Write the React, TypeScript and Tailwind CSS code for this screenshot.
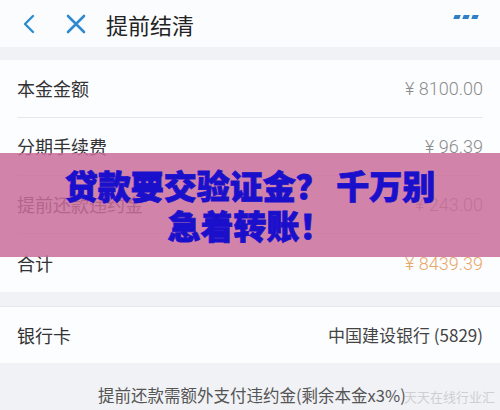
import React from 'react';

const font = { fontFamily: '"Noto Sans CJK SC", "Noto Sans", sans-serif' };
const num = { fontFamily: 'Roboto, "Noto Sans CJK SC", sans-serif' };

const rows = [
  { label: '本金金额', value: '¥ 8100.00', accent: false },
  { label: '分期手续费', value: '¥ 96.39', accent: false },
  { label: '提前还款违约金', value: '¥ 243.00', accent: false },
  { label: '合计', value: '¥ 8439.39', accent: true },
];

const App = () => {
  return (
    <div className="relative w-[500px] h-[410px] overflow-hidden bg-[#f1f2f6]" style={font}>
      {/* header */}
      <div className="h-[47px] bg-[#fbfcfe] flex items-center">
        <svg width="16" height="22" viewBox="0 0 16 22" className="ml-[21px]">
          <path d="M12 3 L4 11 L12 19" fill="none" stroke="#2f8bd0" strokeWidth="2.4" strokeLinecap="round" strokeLinejoin="round" />
        </svg>
        <svg width="22" height="22" viewBox="0 0 22 22" className="ml-[28px]">
          <path d="M3 3 L19 19 M19 3 L3 19" fill="none" stroke="#2f8bd0" strokeWidth="2.6" strokeLinecap="round" />
        </svg>
        <span className="ml-[19px] text-[22px] text-[#222] leading-none">提前结清</span>
        <div className="ml-auto mr-[22px] flex gap-[3px] -mt-[14px]">
          <span className="w-[6px] h-[4px] bg-[#2f7fc8] -skew-x-[20deg]" />
          <span className="w-[6px] h-[4px] bg-[#2f7fc8] -skew-x-[20deg]" />
          <span className="w-[6px] h-[4px] bg-[#2f7fc8] -skew-x-[20deg]" />
        </div>
      </div>

      {/* amounts card */}
      <div className="mt-[13px] bg-[#fcfdff] px-[17px]">
        {rows.map((r, i) => (
          <div
            key={r.label}
            className={`h-[58px] flex items-center justify-between ${i < rows.length - 1 ? 'border-b border-[#e6e8ec]' : ''}`}
          >
            <span className="text-[18px] text-[#333]">{r.label}</span>
            <span className={`text-[18px] font-light ${r.accent ? 'text-[#e9a767]' : 'text-[#8c8c8c]'}`} style={num}>
              {r.value}
            </span>
          </div>
        ))}
      </div>

      {/* bank card */}
      <div className="mt-[14px] bg-[#fcfdff] px-[17px] h-[57px] flex items-center justify-between border-t border-[#e6e8ec]">
        <span className="text-[18px] text-[#333]">银行卡</span>
        <span className="text-[17px] text-[#444]">中国建设银行 (5829)</span>
      </div>

      {/* footnote */}
      <div className="pl-[98px] pt-[20px] text-[16.5px] text-[#555] whitespace-nowrap">
        提前还款需额外支付违约金(剩余本金x3%)
      </div>
      <div className="absolute left-[404px] top-[387px] text-[13px] text-[#cfcfcf] whitespace-nowrap">天天在线行业汇</div>

      {/* overlay banner */}
      <div className="absolute left-0 top-[153px] w-[500px] h-[104px] bg-[#c96d9a]/85 flex flex-col items-center justify-center">
        <div
          className="text-[33px] font-black text-[#1a10cc] leading-[40px] text-center whitespace-nowrap"
          style={{ WebkitTextStroke: '0.8px #1a10cc' }}
        >
          贷款要交验证金？ 千万别
        </div>
        <div
          className="text-[33px] font-black text-[#1a10cc] leading-[40px] text-center whitespace-nowrap"
          style={{ WebkitTextStroke: '0.8px #1a10cc' }}
        >
          急着转账！
        </div>
      </div>
    </div>
  );
};

export default App;
